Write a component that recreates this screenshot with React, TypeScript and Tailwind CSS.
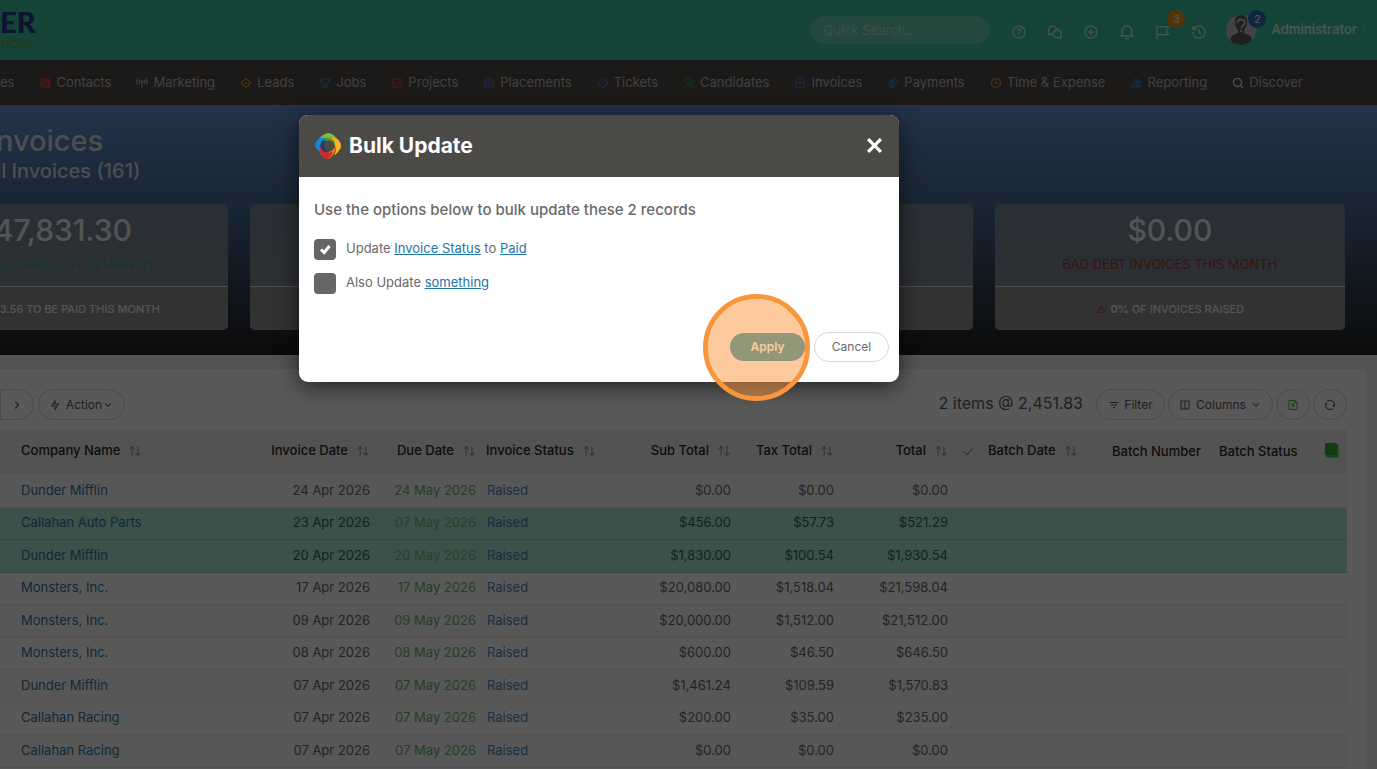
import { useState } from 'react';
import type { ComponentType, ReactNode } from 'react';
import {
  RiAddCircleLine,
  RiAlertLine,
  RiArrowDownSLine,
  RiArrowRightSLine,
  RiArrowUpDownLine,
  RiBarChart2Line,
  RiBillLine,
  RiBriefcase4Line,
  RiCheckboxLine,
  RiCheckLine,
  RiCoinsLine,
  RiContactsBookFill,
  RiFileExcelLine,
  RiFilter3Line,
  RiFlag2Line,
  RiFlashlightLine,
  RiFocus3Line,
  RiGroupLine,
  RiHistoryLine,
  RiLayoutColumnLine,
  RiNotification3Line,
  RiPriceTag3Line,
  RiQuestionLine,
  RiRefreshLine,
  RiSearchLine,
  RiTimeLine,
  RiTrophyLine,
} from 'react-icons/ri';

interface NavItem {
  label: string;
  icon: ComponentType<{ className?: string }>;
  color: string;
}

function AntennaIcon({ className }: { className?: string }) {
  return (
    <svg viewBox="0 0 24 24" className={className} fill="none" stroke="currentColor" strokeWidth="2.200" aria-hidden="true">
      <path d="M4.500 3a10 10 0 0 0 0 13M19.500 3a10 10 0 0 1 0 13M8 6a5.500 5.500 0 0 0 0 7M16 6a5.500 5.500 0 0 1 0 7M12 11v11" />
      <circle cx="12" cy="9.500" r="1.500" fill="currentColor" />
    </svg>
  );
}

function ChatsIcon({ className }: { className?: string }) {
  return (
    <svg viewBox="0 0 24 24" className={className} fill="none" stroke="currentColor" strokeWidth="2" strokeLinejoin="round" aria-hidden="true">
      <path d="M8.500 16c-1.200 0-2.200-.2-3.200-.7L2 16l.8-3.200A6.500 6.500 0 1 1 14.800 8" />
      <path d="M15.500 9a6 6 0 0 1 5.300 8.500l.9 3.500-3.600-.7A6 6 0 1 1 15.500 9z" />
    </svg>
  );
}

const navItems: NavItem[] = [
  { label: 'Contacts', icon: RiContactsBookFill, color: 'text-[#d2453c]' },
  { label: 'Marketing', icon: AntennaIcon, color: 'text-[#b4b4b4]' },
  { label: 'Leads', icon: RiFocus3Line, color: 'text-[#e8a01e]' },
  { label: 'Jobs', icon: RiTrophyLine, color: 'text-[#2f9fd0]' },
  { label: 'Projects', icon: RiCheckboxLine, color: 'text-[#e04a34]' },
  { label: 'Placements', icon: RiBriefcase4Line, color: 'text-[#7a62c9]' },
  { label: 'Tickets', icon: RiPriceTag3Line, color: 'text-[#7a62d4]' },
  { label: 'Candidates', icon: RiGroupLine, color: 'text-[#2e9e4c]' },
  { label: 'Invoices', icon: RiBillLine, color: 'text-[#3a7fdc]' },
  { label: 'Payments', icon: RiCoinsLine, color: 'text-[#3a88f0]' },
  { label: 'Time & Expense', icon: RiTimeLine, color: 'text-[#f08a24]' },
  { label: 'Reporting', icon: RiBarChart2Line, color: 'text-[#2590d8]' },
  { label: 'Discover', icon: RiSearchLine, color: 'text-white' },
];

const headerActions = [
  { label: 'Help', icon: RiQuestionLine },
  { label: 'Chat', icon: ChatsIcon },
  { label: 'Add', icon: RiAddCircleLine },
  { label: 'Notifications', icon: RiNotification3Line },
  { label: 'Flags', icon: RiFlag2Line, badge: 3 },
  { label: 'History', icon: RiHistoryLine },
];

interface Invoice {
  company: string;
  date: string;
  due: string;
  sub: string;
  tax: string;
  total: string;
  selected?: boolean;
}

const invoices: Invoice[] = [
  { company: 'Dunder Mifflin', date: '24 Apr 2026', due: '24 May 2026', sub: '$0.00', tax: '$0.00', total: '$0.00' },
  { company: 'Callahan Auto Parts', date: '23 Apr 2026', due: '07 May 2026', sub: '$456.00', tax: '$57.73', total: '$521.29', selected: true },
  { company: 'Dunder Mifflin', date: '20 Apr 2026', due: '20 May 2026', sub: '$1,830.00', tax: '$100.54', total: '$1,930.54', selected: true },
  { company: 'Monsters, Inc.', date: '17 Apr 2026', due: '17 May 2026', sub: '$20,080.00', tax: '$1,518.04', total: '$21,598.04' },
  { company: 'Monsters, Inc.', date: '09 Apr 2026', due: '09 May 2026', sub: '$20,000.00', tax: '$1,512.00', total: '$21,512.00' },
  { company: 'Monsters, Inc.', date: '08 Apr 2026', due: '08 May 2026', sub: '$600.00', tax: '$46.50', total: '$646.50' },
  { company: 'Dunder Mifflin', date: '07 Apr 2026', due: '07 May 2026', sub: '$1,461.24', tax: '$109.59', total: '$1,570.83' },
  { company: 'Callahan Racing', date: '07 Apr 2026', due: '07 May 2026', sub: '$200.00', tax: '$35.00', total: '$235.00' },
  { company: 'Callahan Racing', date: '07 Apr 2026', due: '07 May 2026', sub: '$0.00', tax: '$0.00', total: '$0.00' },
];

function Avatar() {
  return (
    <svg viewBox="0 0 30 30" className="size-[30px]" aria-hidden="true">
      <defs>
        <clipPath id="avatar-clip">
          <circle cx="15" cy="15" r="15" />
        </clipPath>
      </defs>
      <g clipPath="url(#avatar-clip)">
        <rect width="30" height="30" fill="#c4bfbf" />
        <path d="M15 0c4.500 0 6.500 3.500 6 7.500-.4 3.500-1.500 6-3 7.500v3c3.500 1.200 6.500 2.500 7.500 5L26 30H4l.5-7c1-2.500 4-3.800 7.500-5v-3c-1.500-1.500-2.600-4-3-7.500C8.500 3.500 10.500 0 15 0z" fill="#5c5757" />
        <path d="M11.500 8c0-2.200 1.500-3.600 3.600-3.600s3.600 1.400 3.600 3.300c0 2.800-3.400 2.900-3.400 5.600" fill="none" stroke="#c9c5c5" strokeWidth="2" />
        <circle cx="15.300" cy="16" r="1.300" fill="#c9c5c5" />
      </g>
    </svg>
  );
}

function BrandMark() {
  return (
    <svg viewBox="0 0 26 26" className="size-[26px]" aria-hidden="true">
      <path d="M3 7C6 3 10 0 13.500 0c3 0 7 3 9.500 7-3-2-7-3-10-1.500C9 4.500 6 5.500 3 7z" fill="#7dbb42" />
      <path d="M23 6.500c2 2 3 4.500 3 6.500 0 3-3.500 7-7 9.500 1.500-3 2.500-6 1-9.500-.5-3-3-6-6.500-7.500C16.500 4 20 4.500 23 6.500z" fill="#fbb321" />
      <path d="M20.500 13c.5 5-3 11-7 13-3 0-7-3-9-6.500 3 1.500 6.500 1.500 9.500-.5 3-1 5.500-3 6.500-6z" fill="#f5811f" />
      <path d="M5.500 13c.5 4 4 7 8.500 6.500 1.500 0 3-.5 4-1-1 3.500-3 6-5 7.500-3-.5-6.500-3.500-8.500-6.500C4 17.500 4.500 15 5.500 13z" fill="#d9232e" />
      <path d="M12.500 5.500C8.500 6 5.500 9 5.500 13c-.5 2-.8 4 0 6C2 16.500 0 14.500 0 12.500 0 10 1.500 8 3.500 6c3-1.500 6-1.500 9-.5z" fill="#1586d6" />
      <path d="M5.500 12c1-4 4-6.500 8-6.500-3 1.500-5 4-4.500 7.500.3 2.500 1.500 4.500 3.500 6.200-4-.2-7-3.200-7-7.200z" fill="#11407f" />
      <path d="M10 5.200c5-1.500 10 1.500 10.500 7-1.500-3-4.500-5-8-4.700-1.500 0-2.500.5-3.500 1z" fill="#4a9a3c" />
    </svg>
  );
}

function BookIcon() {
  return (
    <svg viewBox="0 0 14 15" className="ml-auto h-[15px] w-[14px]" aria-hidden="true">
      <rect x="1" y="1" width="13" height="14" rx="1" fill="#7fca7f" />
      <rect x="0" y="0" width="12" height="12" rx="1" fill="#32a832" />
      <path d="M1 13h11" stroke="#32a832" />
    </svg>
  );
}

function StatCard({ value, label, labelColor, children }: { value?: string; label?: string; labelColor?: string; children?: ReactNode }) {
  return (
    <section className="flex h-[126px] min-w-0 flex-1 flex-col overflow-hidden rounded-[5px] bg-linear-to-b from-[#76869a] to-[#86888c] text-center">
      <div className="flex-1 pt-2">
        <p className="text-[30px] leading-9 font-medium text-[#f0f0f0]">{value}</p>
        <p className={`mt-2 text-[13px] leading-4 ${labelColor}`}>{label}</p>
      </div>
      <div className="flex h-11 items-center justify-center border-t border-[#e0e0e0] bg-[#909192] pt-px text-[11px] font-medium text-[#f0f0f0]">{children}</div>
    </section>
  );
}

function Th({ children, right, sortable = true }: { children: string; right?: boolean; sortable?: boolean }) {
  return (
    <th className={`px-[5px] font-medium whitespace-nowrap ${sortable ? 'pb-[2px]' : ''} ${right ? 'text-right' : 'text-left'}`}>
      <span className="inline-flex items-center gap-2">
        {children}
        {sortable && <RiArrowUpDownLine className="size-[14px] text-[#999]" />}
      </span>
    </th>
  );
}

function Pill({ children, className = '', label }: { children: ReactNode; className?: string; label?: string }) {
  return (
    <button aria-label={label} className={`flex h-[31px] items-center justify-center rounded-full border border-[#d4d4d4] text-xs text-[#5a5a5a] ${className}`}>
      {children}
    </button>
  );
}

function TopBar() {
  return (
    <header className="flex h-[60px] items-center justify-between bg-[#3bc09e] pr-[10px]">
      <a href="#home" className="pb-1 font-['Lato',sans-serif]">
        <span className="block text-[29px] leading-8 font-black text-[#26388c]">ER</span>
        <span className="block text-[11px] leading-3 text-[#7f9a1e]">TIONS</span>
      </a>
      <div className="flex items-center">
        <input
          type="search"
          aria-label="Quick Search"
          placeholder="Quick Search..."
          className="mr-5 h-7 w-[180px] rounded-full bg-[#67ccb3] px-[13px] text-[13px] placeholder:text-[#b4e2d6]"
        />
        <div className="flex">
          {headerActions.map(({ label, icon: Icon, badge }) => (
            <button key={label} aria-label={label} className="relative flex w-9 px-px pt-1 text-[#c9efe4]">
              <Icon className="size-4" />
              {badge && (
                <span className="absolute -top-[10px] left-[13px] flex size-[18px] items-center justify-center rounded-full bg-[#ee9220] text-[11px] font-medium text-[#f0f0f0]">
                  {badge}
                </span>
              )}
            </button>
          ))}
        </div>
        <button className="relative flex items-center gap-[15px] text-[13px] font-semibold text-[#d3f1e8]">
          <Avatar />
          <span className="absolute -top-[5px] left-[22px] flex size-[18px] items-center justify-center rounded-full bg-[#2d6db8] text-[11px] font-medium text-[#f0f0f0]">2</span>
          <span className="flex items-center gap-1">
            Administrator
            <svg viewBox="0 0 6 4" className="w-[6px]" aria-hidden="true">
              <path d="M0 0h6L3 4z" fill="#68c4ab" />
            </svg>
          </span>
        </button>
      </div>
    </header>
  );
}

function InvoiceTable() {
  return (
    <table className="w-full table-fixed border-collapse text-[13px] text-[#666]">
      <colgroup>
        <col className="w-4" />
        <col />
        <col className="w-[115px]" />
        <col className="w-[106px]" />
        <col className="w-[161px]" />
        <col className="w-[94px]" />
        <col className="w-[103px]" />
        <col className="w-[114px]" />
        <col className="w-[30px]" />
        <col className="w-[124px]" />
        <col className="w-[107px]" />
        <col className="w-[95px]" />
        <col className="w-[38px]" />
      </colgroup>
      <thead className="bg-[#eeeeee] text-[#2a2a2a]">
        <tr className="h-11">
          <th />
          <Th>Company Name</Th>
          <Th right>Invoice Date</Th>
          <Th right>Due Date</Th>
          <Th>Invoice Status</Th>
          <Th right>Sub Total</Th>
          <Th right>Tax Total</Th>
          <Th right>Total</Th>
          <th>
            <RiCheckLine className="mx-auto size-[14px] text-[#5cb85c]" />
          </th>
          <Th>Batch Date</Th>
          <Th sortable={false}>Batch Number</Th>
          <Th sortable={false}>Batch Status</Th>
          <th className="pr-2 pb-1">
            <BookIcon />
          </th>
        </tr>
      </thead>
      <tbody>
        {invoices.map((inv, i) => (
          <tr
            key={i}
            className={`border-b odd:h-[33px] even:h-8 ${
              inv.selected ? 'border-[#8fd0bb] bg-[#a9e7d3] text-[#2a6a58]' : 'border-[#e9e9e9] odd:bg-[#f8f8f8]'
            }`}
          >
            <td />
            <td className="px-[5px]"><a href="#company" className="text-[#2b78a6]">{inv.company}</a></td>
            <td className="px-[5px] text-right">{inv.date}</td>
            <td className={`px-[5px] text-right ${inv.selected ? 'text-[#6cc07a]' : 'text-[#64b864]'}`}>{inv.due}</td>
            <td className="px-[6px]"><a href="#status" className="text-[#4389c2]">Raised</a></td>
            <td className="px-[5px] text-right">{inv.sub}</td>
            <td className="px-[5px] text-right">{inv.tax}</td>
            <td className="px-[5px] text-right">{inv.total}</td>
            <td colSpan={5} />
          </tr>
        ))}
      </tbody>
    </table>
  );
}

function BulkUpdateDialog() {
  const [updateStatus, setUpdateStatus] = useState(true);
  const [alsoUpdate, setAlsoUpdate] = useState(false);
  const box = 'h-[21px] w-[22px] shrink-0 appearance-none rounded-[4px] bg-[#666]';

  return (
    <div role="dialog" aria-labelledby="dialog-title" className="relative w-[600px] rounded-[9px] bg-white pb-5 text-[#6a6a6a] shadow-[0_5px_22px_rgba(0,0,0,0.6)]">
      <div className="flex h-[62px] items-center gap-2 rounded-t-[9px] bg-[#4b4a47] px-4 pb-px">
        <BrandMark />
        <h2 id="dialog-title" className="flex-1 text-[21px] leading-7 font-bold text-white">Bulk Update</h2>
        <button aria-label="Close" className="text-white">
          <svg viewBox="0 0 16 16" className="size-[17px]" aria-hidden="true">
            <path d="M2 2l12 12M14 2L2 14" fill="none" stroke="currentColor" strokeWidth="3" />
          </svg>
        </button>
      </div>
      <div className="px-[15px] pt-[23px]">
        <p className="text-[15px] leading-5 font-medium">Use the options below to bulk update these 2 records</p>
        <div className="mt-[19px] flex h-[21px] items-center gap-[10px] text-[13px]">
          <span className="relative flex">
            <input id="update-status" type="checkbox" checked={updateStatus} onChange={(e) => setUpdateStatus(e.target.checked)} className={box} />
            {updateStatus && (
              <svg viewBox="0 0 22 21" className="pointer-events-none absolute inset-0" aria-hidden="true">
                <path d="M7 10.500l3.200 3L15.500 7" fill="none" stroke="#fff" strokeWidth="3" />
              </svg>
            )}
          </span>
          <label htmlFor="update-status" className="pb-[2px]">
            Update <a href="#field" className="text-[#1f74a8] underline">Invoice Status</a> to <a href="#value" className="text-[#1f74a8] underline">Paid</a>
          </label>
        </div>
        <div className="mt-[13px] flex h-[21px] items-center gap-[10px] text-[13px]">
          <input id="also-update" type="checkbox" checked={alsoUpdate} onChange={(e) => setAlsoUpdate(e.target.checked)} className={box} />
          <label htmlFor="also-update" className="pb-[2px]">
            Also Update <a href="#other" className="text-[#1f74a8] underline">something</a>
          </label>
        </div>
      </div>
      <div className="mt-[38px] flex items-center justify-end gap-[9px] pr-[10px] text-xs">
        <button className="h-7 w-[75px] rounded-full bg-[#2b99b8] font-semibold text-white">Apply</button>
        <button className="h-[30px] w-[75px] rounded-full border border-[#d6d6d6]">Cancel</button>
      </div>
      {/* Click highlight over the Apply button */}
      <div className="pointer-events-none absolute top-[179px] left-[404px] size-[107px] rounded-full border-5 border-[#f9963c] bg-[#f9963c]/50 bg-clip-padding" />
    </div>
  );
}

export default function App() {
  return (
    <div className="relative h-screen overflow-hidden bg-[#ededed] font-['Inter',sans-serif]">
      <TopBar />

      <nav className="flex h-[45px] items-center gap-[25px] bg-[#4f4a48] text-[13px] whitespace-nowrap text-[#b8b8b8]">
        <a href="#companies">es</a>
        {navItems.map(({ label, icon: Icon, color }) => (
          <a key={label} href="#nav" className="flex items-center gap-[5px]">
            <Icon className={`size-3 ${color}`} />
            {label}
          </a>
        ))}
      </nav>

      <div className="h-[250px] bg-linear-to-b from-[#6690d4] via-[#4a6c98] via-40% to-[#1e2022] pt-5">
        <div className="text-[#dedede]">
          <h1 className="-ml-3 text-[29px] leading-8 font-medium">Invoices</h1>
          <h2 className="-ml-[18px] text-xl leading-7 font-medium">All Invoices (161)</h2>
        </div>
        <div className="mt-[19px] mr-8 -ml-[122px] flex gap-[22px]">
          <StatCard value="$47,831.30" label="INVOICES RAISED THIS MONTH" labelColor="text-[#2f9f7e]">
            <span className="pl-[53px]">3.56 TO BE PAID THIS MONTH</span>
          </StatCard>
          <StatCard />
          <StatCard />
          <StatCard value="$0.00" label="BAD DEBT INVOICES THIS MONTH" labelColor="text-[#a8352f]">
            <RiAlertLine className="mr-[5px] size-[10px] text-[#a83a34]" />
            <span><b className="font-semibold">0%</b> OF INVOICES RAISED</span>
          </StatCard>
        </div>
      </div>

      <main className="mt-[14px] mr-[10px] rounded-tr-md bg-white pt-5 pr-5 pb-8">
        <div className="mb-[10px] flex items-center">
          <button aria-label="Next page" className="mr-1 flex h-[31px] w-[34px] items-center justify-center rounded-r-full border border-[#d4d4d4] text-[#555]">
            <RiArrowRightSLine className="size-[14px]" />
          </button>
          <Pill className="w-[87px]">
            <RiFlashlightLine className="mr-[5px] size-3" />
            Action
            <RiArrowDownSLine className="size-3" />
          </Pill>
          <p className="mr-[13px] ml-auto pb-[3px] text-base text-[#5a5a5a]">2 items @ 2,451.83</p>
          <div className="flex gap-[3px]">
            <Pill className="w-[69px]">
              <RiFilter3Line className="mr-1 size-3" />
              Filter
            </Pill>
            <Pill className="w-[105px]">
              <RiLayoutColumnLine className="mr-[5px] size-3" />
              Columns
              <RiArrowDownSLine className="ml-1 size-3" />
            </Pill>
            <Pill label="Export to Excel" className="w-[34px]">
              <RiFileExcelLine className="size-3 text-[#3cb53c]" />
            </Pill>
            <Pill label="Refresh" className="w-[34px]">
              <RiRefreshLine className="size-3" />
            </Pill>
          </div>
        </div>
        <InvoiceTable />
      </main>

      {/* Backdrop dims the page behind the dialog */}
      <div className="absolute inset-0 bg-black/65 pt-[115px] pl-[299px]">
        <BulkUpdateDialog />
      </div>
    </div>
  );
}
